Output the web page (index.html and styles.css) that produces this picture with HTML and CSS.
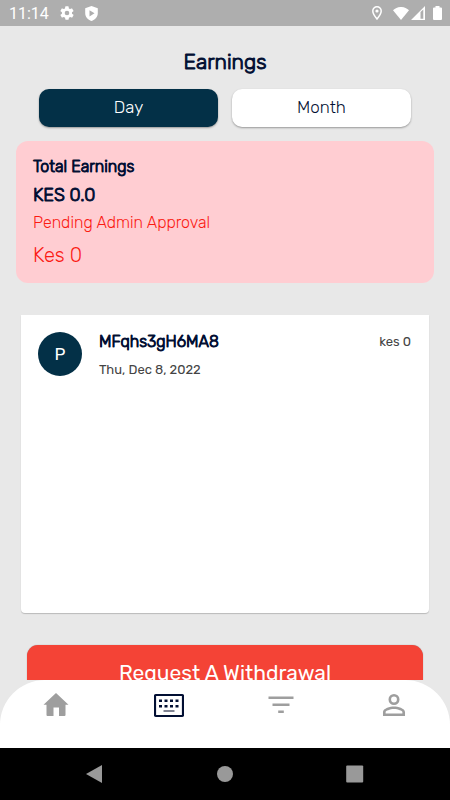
FILE: index.html
```html
<!DOCTYPE html>
<html lang="en">
<head>
<meta charset="utf-8">
<meta name="viewport" content="width=device-width, initial-scale=1">
<title>Earnings</title>
<link rel="stylesheet" href="styles.css">
</head>
<body>
<div class="screen">
  <header class="status">
    <time class="clock">11:14</time>
    <svg class="gear" viewBox="2 2 20 20"><path fill="currentColor" fill-rule="evenodd" d="M19.1 12.9a7 7 0 0 0 0-1.8l2-1.6a.5.5 0 0 0 .1-.6l-1.900-3.300a.5.5 0 0 0-.6-.2l-2.400 1a7 7 0 0 0-1.600-1l-.4-2.500a.5.5 0 0 0-.5-.4h-3.800a.5.5 0 0 0-.5.4l-.4 2.500a7 7 0 0 0-1.600 1l-2.400-1a.5.5 0 0 0-.6.2L2.700 8.900a.5.5 0 0 0 .1.600l2 1.600a7 7 0 0 0 0 1.800l-2 1.600a.5.5 0 0 0-.1.600l1.900 3.300a.5.5 0 0 0 .6.200l2.400-1a7 7 0 0 0 1.600 1l.4 2.500a.5.5 0 0 0 .5.400h3.800a.5.5 0 0 0 .5-.4l.4-2.500a7 7 0 0 0 1.600-1l2.400 1a.5.5 0 0 0 .6-.2l1.900-3.300a.5.5 0 0 0-.1-.600zM12 15.300a3.300 3.300 0 1 1 0-6.600 3.300 3.300 0 0 1 0 6.600z"/></svg>
    <svg class="shield" viewBox="0 0 14 15"><path fill="currentColor" fill-rule="evenodd" d="M7 0 13.300 2.300V7c0 4-2.700 6.700-6.300 8C3.400 13.700.7 11 .7 7V2.300zM5 4.200v6.200l5-3.100z"/></svg>
    <span class="spacer"></span>
    <svg class="pin" viewBox="0 0 12 14"><path fill="none" stroke="currentColor" stroke-width="1.500" d="M6 .8a4.200 4.200 0 0 0-4.200 4.300C1.800 8 6 13 6 13s4.200-5 4.200-7.900A4.200 4.200 0 0 0 6 .8z"/><circle cx="6" cy="5" r="1.600" fill="currentColor"/></svg>
    <svg class="wifi" viewBox="0 0 16 13"><path fill="currentColor" d="M0 3.200C4.600-1.100 11.400-1.100 16 3.200L8 13z"/></svg>
    <svg class="signal" viewBox="0 0 14 14"><path fill="currentColor" fill-rule="evenodd" d="M0 14 14 0v14zM9.500 6v6.700h2.800V3.500z"/></svg>
    <svg class="battery" viewBox="0 0 9 14"><path fill="currentColor" d="M2.500 0h4v1.500H8a1 1 0 0 1 1 1V13a1 1 0 0 1-1 1H1a1 1 0 0 1-1-1V2.500a1 1 0 0 1 1-1h1.500z"/></svg>
  </header>

  <main class="content">
    <h1 class="title">Earnings</h1>
    <div class="tabs">
      <button class="tab tab-active" type="button">Day</button>
      <button class="tab" type="button">Month</button>
    </div>
    <section class="summary">
      <h2 class="summary-title">Total Earnings</h2>
      <p class="summary-total">KES 0.0</p>
      <p class="pending-label">Pending Admin Approval</p>
      <p class="pending-total">Kes 0</p>
    </section>
    <section class="list">
      <article class="entry">
        <span class="avatar">P</span>
        <div class="entry-text">
          <h3 class="entry-code">MFqhs3gH6MA8</h3>
          <p class="entry-date">Thu, Dec 8, 2022</p>
        </div>
        <span class="entry-amount">kes 0</span>
      </article>
    </section>
    <button class="withdraw" type="button">Request A Withdrawal</button>
  </main>

  <div class="dock">
    <nav class="nav">
      <a class="nav-item" href="#home" aria-label="Home"><svg viewBox="0 0 30 30"><path fill="currentColor" d="M15 3 27.500 14.800H24.500V25a1 1 0 0 1-1 1H18v-8.500h-5.500V26H6.500a1 1 0 0 1-1-1V14.800H2.500z"/></svg></a>
      <a class="nav-item nav-current" href="#earnings" aria-label="Earnings" aria-current="page"><svg viewBox="0 0 30 30"><rect x="1" y="5" width="28" height="21" rx="1" fill="none" stroke="currentColor" stroke-width="2.200"/><path fill="currentColor" d="M5 9.500h3v2.500H5zM10.500 9.500h3v2.500h-3zM16 9.500h3v2.500h-3zM21.500 9.500h3v2.500h-3zM5 15h3v2.500H5zM10.500 15h3v2.500h-3zM16 15h3v2.500h-3zM21.500 15h3v2.500h-3z"/><path fill="#808493" d="M9.500 20h11v2h-11z"/></svg></a>
      <a class="nav-item" href="#filter" aria-label="Filter"><svg viewBox="0 0 30 30"><path fill="currentColor" d="M2.500 6.500h25V9h-25zM6.500 13.500h17V16h-17zM12.200 20.500h5.600V23h-5.600z"/></svg></a>
      <a class="nav-item" href="#profile" aria-label="Profile"><svg viewBox="1.100 1.100 21.800 21.800"><path fill="currentColor" d="M12 5.900a2.100 2.100 0 1 1 0 4.200 2.100 2.100 0 0 1 0-4.200m0 9c3 0 6.100 1.500 6.100 2.100v1.100H5.900V17c0-.6 3.100-2.100 6.100-2.100M12 4a4 4 0 1 0 0 8 4 4 0 0 0 0-8zm0 9c-2.700 0-8 1.300-8 4v3h16v-3c0-2.700-5.300-4-8-4z"/></svg></a>
    </nav>
  </div>

  <footer class="system">
    <button class="key" type="button" aria-label="Back"><svg viewBox="0 0 20 20"><path fill="currentColor" d="M17 1v18L1 10z"/></svg></button>
    <button class="key" type="button" aria-label="Home"><svg viewBox="0 0 20 20"><circle cx="10" cy="10" r="8" fill="currentColor"/></svg></button>
    <button class="key" type="button" aria-label="Recent apps"><svg viewBox="0 0 20 20"><rect x="1.200" y="1.500" width="17" height="17" rx="1" fill="currentColor"/></svg></button>
  </footer>
</div>
</body>
</html>
```
FILE: styles.css
```css
* { box-sizing: border-box; }
body, h1, h2, h3, p { margin: 0; }
body {
  background: #e8e8e8;
  color: #020f33;
  font-family: Rubik, Roboto, sans-serif;
  font-weight: 300;
}
button { border: 0; padding: 0; font: inherit; }
svg { display: block; }

.screen { display: flex; flex-direction: column; height: 100vh; }

.status {
  display: flex;
  flex: none;
  align-items: center;
  height: 26px;
  padding: 0 8px 0 9px;
  background: #aeaeae;
  color: #fff;
}
.clock { margin-right: 11px; padding-top: 2px; font-family: Roboto, sans-serif; font-size: 16px; font-weight: 400; line-height: 24px; }
.gear { width: 14px; height: 14px; margin-right: 10px; }
.shield { width: 15px; height: 15px; }
.spacer { flex: 1; }
.pin { width: 12px; height: 14px; margin-right: 10px; }
.wifi { width: 16px; height: 13px; margin-right: 2px; }
.signal { width: 14px; height: 14px; margin-right: 8px; }
.battery { width: 9px; height: 14px; }

.content {
  display: flex;
  flex: 1;
  flex-direction: column;
  min-height: 0;
  padding: 22px 16px 0;
  overflow: hidden;
}
.title,
.summary-title,
.summary-total,
.entry-code { font-weight: 300; -webkit-text-stroke: 1px currentColor; }
.title { font-size: 21px; line-height: 28px; text-align: center; }

.tabs { display: flex; flex: none; gap: 14px; margin: 13px 23px 14px; }
.tab {
  flex: 1;
  height: 38px;
  padding-bottom: 2px;
  border-radius: 10px;
  background: #fff;
  color: #020f33;
  box-shadow: 0 1px 2px rgba(0, 0, 0, .35);
  font-size: 16px;
  font-weight: 400;
}
.tab-active { background: #033047; color: #fff; }

.summary {
  flex: none;
  padding: 14px 17px;
  border-radius: 12px;
  background: #ffcdd2;
}
.summary-title { font-size: 16px; line-height: 24px; }
.summary-total { margin-top: 4px; font-size: 18px; line-height: 24px; }
.pending-label { margin-top: 4px; color: #fb1a12; font-size: 16px; line-height: 24px; }
.pending-total { margin-top: 6px; color: #fb1a12; font-size: 20px; line-height: 28px; }

.tab { font-size: 17px; font-weight: 300; }

.list {
  flex: none;
  min-height: 298px;
  margin: 32px 5px 0;
  padding: 17px 18px 17px 17px;
  border-radius: 0 0 4px 4px;
  background: #fff;
  box-shadow: 0 1px 1px rgba(0, 0, 0, .2);
}
.entry { display: flex; align-items: flex-start; }
.avatar {
  flex: none;
  width: 44px;
  height: 44px;
  border-radius: 50%;
  background: #033047;
  color: #fff;
  font-size: 17px;
  font-weight: 400;
  line-height: 44px;
  text-align: center;
}
.entry-text { flex: 1; margin-left: 17px; }
.entry-code { font-size: 16px; line-height: 20px; }
.entry-date,
.entry-amount { color: #444; font-size: 13px; font-weight: 400; line-height: 20px; }
.entry-date { margin-top: 8px; }

.withdraw {
  flex: none;
  height: 54px;
  margin: 32px 11px 0;
  border-radius: 11px;
  background: #f44336;
  color: #fff;
  box-shadow: 0 0 1px rgba(0, 0, 0, .4);
  font-size: 21px;
  font-weight: 400;
}

.dock { flex: none; background: #e8e8e8; }
.nav {
  display: grid;
  grid-template-columns: repeat(4, 1fr);
  height: 68px;
  padding-top: 10px;
  border-radius: 45px 45px 0 0;
  background: #fff;
}
.nav-item { display: flex; justify-content: center; color: #9e9e9e; }
.nav-item svg { width: 30px; height: 30px; }
.nav-current { color: #020f33; }

.system {
  display: flex;
  flex: none;
  justify-content: center;
  align-items: center;
  gap: 110px;
  height: 52px;
  background: #000;
}
.key { background: none; color: #999; }
.key svg { width: 20px; height: 20px; }
```
